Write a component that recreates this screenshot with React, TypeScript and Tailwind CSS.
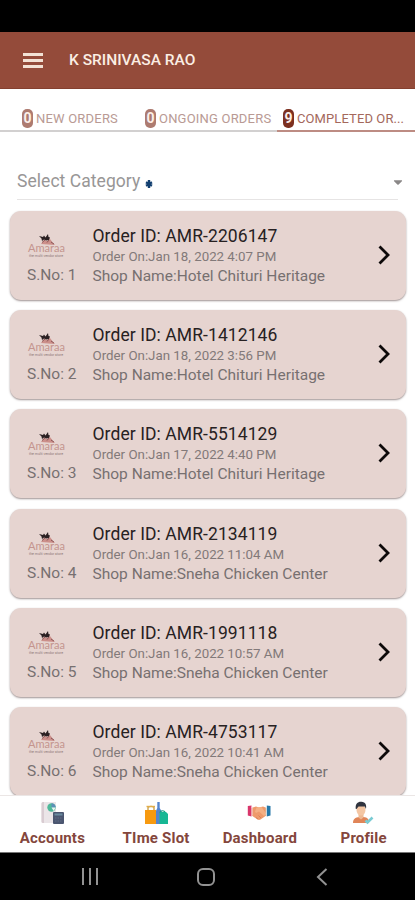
import { FaCaretDown } from 'react-icons/fa';

const tabs = [
  { count: 0, label: 'NEW ORDERS', className: 'w-[123px] pl-[22px]', active: false },
  { count: 0, label: 'ONGOING ORDERS', className: 'w-[154px] pl-[22px]', active: false },
  { count: 9, label: 'COMPLETED OR...', className: 'w-[138px] pl-[6px]', active: true },
];

const orders = [
  { id: 'AMR-2206147', date: 'Jan 18, 2022 4:07 PM', shop: 'Hotel Chituri Heritage' },
  { id: 'AMR-1412146', date: 'Jan 18, 2022 3:56 PM', shop: 'Hotel Chituri Heritage' },
  { id: 'AMR-5514129', date: 'Jan 17, 2022 4:40 PM', shop: 'Hotel Chituri Heritage' },
  { id: 'AMR-2134119', date: 'Jan 16, 2022 11:04 AM', shop: 'Sneha Chicken Center' },
  { id: 'AMR-1991118', date: 'Jan 16, 2022 10:57 AM', shop: 'Sneha Chicken Center' },
  { id: 'AMR-4753117', date: 'Jan 16, 2022 10:41 AM', shop: 'Sneha Chicken Center' },
];

function ShopLogo() {
  return (
    <svg width="40" height="26" viewBox="0 0 40 26" className="block">
      <path d="M14 11 L17 7 L20 8 L23 6 L26 10 L28 12 Z" fill="#c0726c" opacity="0.7" />
      <path d="M12 3 L16 4 L17 2.500 L18.500 4.500 L21 1 L21.500 4 L23 4.500 L22 7 L19 7.500 L17 6.500 L15 8 L14.500 5.500 Z" fill="#2b2022" />
      <path d="M15 9.500 L18 7 M20 9.500 L22 7 M24 9 L27 11" stroke="#7b4648" strokeWidth="0.800" fill="none" />
      <text x="1" y="19" fontSize="11" fill="#c4948e" textLength="37" lengthAdjust="spacingAndGlyphs" fontFamily="Lato, sans-serif">
        Amaraa
      </text>
      <text x="2" y="24" fontSize="3" fill="#8f7a77" textLength="34" lengthAdjust="spacingAndGlyphs" fontFamily="Roboto, sans-serif">
        the multi vendor store
      </text>
    </svg>
  );
}

function AccountsIcon() {
  return (
    <svg width="24" height="24" viewBox="0 0 24 24">
      <path d="M3 1h13v21H3a1.500 1.500 0 0 1-1.500-1.500V2.500A1.500 1.500 0 0 1 3 1z" fill="#ebe5e8" />
      <path d="M1.500 2.500A1.500 1.500 0 0 1 3 1h1v21H3a1.500 1.500 0 0 1-1.500-1.500z" fill="#d9ccd2" />
      <circle cx="11.500" cy="6.500" r="4.200" fill="#4fb99a" />
      <path d="M11.500 6.500V2.300a4.200 4.200 0 0 1 4.200 4.200z" fill="#5d8fb8" />
      <path d="M11.500 6.500h4.200l-2 3.500z" fill="#e9f3ef" />
      <rect x="13" y="11" width="11" height="12" rx="1" fill="#4b5670" />
      <rect x="14.500" y="12.500" width="8" height="2" fill="#6b8ba0" />
      <path d="M15 17h7M15 20h7" stroke="#616c85" strokeWidth="1" strokeDasharray="1.500 1" />
    </svg>
  );
}

function TimeSlotIcon() {
  return (
    <svg width="24" height="24" viewBox="0 0 24 24">
      <path d="M4 10V6.500C4 5 10 5 10 6.500V10" stroke="#c89a3c" strokeWidth="1.300" fill="none" />
      <path d="M2.500 5.500h8.500" stroke="#e2ad4a" strokeWidth="1.400" />
      <path d="M13.300 1h2.400v6l2.300 4v12h-6.500V11l1.800-4z" fill="#5485cf" />
      <rect x="1" y="9" width="11" height="14" fill="#f79a10" />
      <path d="M16 12c0-3 5-3 5 0" stroke="#1c9f81" strokeWidth="1.200" fill="none" />
      <path d="M15.500 12.500L17 11h5l2 2v10h-8.500z" fill="#17b794" />
    </svg>
  );
}

function DashboardIcon() {
  return (
    <svg width="24" height="24" viewBox="0 0 24 24">
      <path d="M4 7l5-1.500L12 6.500l4-1L20 7v7l-6.500 4.500c-1 .6-2 .6-3 0L4 14z" fill="#ee9a6b" />
      <path d="M9.500 6.500l5-.500 5 7-2.500 2-5-4.500-3 1.500-1-1.500z" fill="#f5b083" />
      <path d="M9 16.500l2 1.500M11.500 14.500l2.500 2.500" stroke="#d98055" strokeWidth="0.900" />
      <path d="M.8 5L4.500 4.500v11L.8 14.500z" fill="#d9366b" />
      <path d="M4.500 5.500l1 .3v8.700l-1 .3z" fill="#f6dbe3" />
      <path d="M23.500 5L19.800 4.500v11l3.700-1z" fill="#2477a8" />
      <path d="M19.800 5.500l-1 .3v8.700l1 .3z" fill="#d5e9f2" />
    </svg>
  );
}

function ProfileIcon() {
  return (
    <svg width="24" height="24" viewBox="0 0 24 24">
      <path d="M2 22c0-4 2-5.500 6.500-6h4c4 .5 5.500 2 5.500 6z" fill="#e08558" />
      <path d="M7.500 12h5v4.500l-2.500 2-2.500-2z" fill="#eeb993" />
      <ellipse cx="10" cy="9" rx="4.500" ry="5.500" fill="#f4c6a3" />
      <path d="M4.800 8C4 2.500 7 .5 10.500.8 14.500 1 15.800 4 15 8l-1.200-2.500H7.500L5.500 8z" fill="#30343f" />
      <path d="M14.500 19.500l2 2 5-5" stroke="#79cbd3" strokeWidth="2.600" fill="none" />
    </svg>
  );
}

const navItems = [
  { label: 'Accounts', icon: AccountsIcon },
  { label: 'TIme Slot', icon: TimeSlotIcon },
  { label: 'Dashboard', icon: DashboardIcon },
  { label: 'Profile', icon: ProfileIcon },
];

export default function App() {
  return (
    <div className="flex h-[900px] w-[415px] flex-col overflow-hidden bg-white font-['Roboto',sans-serif]">
      <div className="h-8 shrink-0 bg-black" />

      <header className="flex h-[57px] shrink-0 items-center border-b border-[#84402f] bg-[#944b3a] pl-[23px]">
        <div className="flex w-5 flex-col gap-[3px]">
          <span className="h-[3px] bg-[#f3e2d5]" />
          <span className="h-[3px] bg-[#f3e2d5]" />
          <span className="h-[3px] bg-[#f3e2d5]" />
        </div>
        <h1 className="ml-[26px] pt-px text-[15.500px] font-medium text-[#fbeee4]">K SRINIVASA RAO</h1>
      </header>

      <nav className="flex h-[43px] shrink-0">
        {tabs.map((tab) => (
          <div
            key={tab.label}
            className={`flex items-center whitespace-nowrap border-b-2 pt-[18px] ${tab.className} ${
              tab.active ? 'border-[#bd8c83] text-[#a4685c]' : 'border-[#d2d0d0] text-[#b99a94]'
            }`}
          >
            <span
              className={`flex h-[19px] w-[11px] items-center justify-center rounded-[5px] text-[14px] font-bold text-[#fbeee9] ${
                tab.active ? 'bg-[#7c3020]' : 'bg-[#ad7b70]'
              }`}
            >
              {tab.count}
            </span>
            <span className={`ml-[3px] text-[13px] ${tab.active ? 'tracking-[0.1px]' : 'tracking-[0.2px]'}`}>
              {tab.label}
            </span>
          </div>
        ))}
      </nav>

      <div className="mx-[17px] flex h-[68px] shrink-0 items-center border-b border-[#e6e4e4] pt-[32px]">
        <span className="text-[17.500px] tracking-[0.050px] text-[#989696]">Select Category</span>
        <svg width="8" height="8" viewBox="0 0 8 8" className="ml-[5px] mt-1">
          <path d="M4 0v8M1 2.300l6 3.400M7 2.300l-6 3.400" stroke="#123f70" strokeWidth="2.400" />
        </svg>
        <FaCaretDown className="-mr-[7px] ml-auto h-3.5 w-3.5 text-[#8a8787]" />
      </div>

      <main className="flex min-h-0 flex-1 flex-col gap-[10.200px] overflow-hidden pl-[10px] pr-[9px] pt-[11px]">
        {orders.map((order, index) => (
          <div
            key={order.id}
            className="flex h-[89px] shrink-0 rounded-[11px] bg-[#e6d4d0] shadow-[0_1px_2px_rgba(60,35,35,0.5)]"
          >
            <div className="w-[82.500px] shrink-0 pl-[17px] pt-[22px]">
              <ShopLogo />
              <p className="text-[15.500px] leading-[32px] text-[#777070]">S.No: {index + 1}</p>
            </div>
            <div className="flex-1 whitespace-nowrap pt-[14px]">
              <h2 className="text-[17.500px] leading-[23px] tracking-[0.080px] text-[#272122]">Order ID: {order.id}</h2>
              <p className="text-[13.300px] leading-[18px] text-[#827979]">Order On:{order.date}</p>
              <p className="text-[15.500px] leading-[20px] text-[#777070]">Shop Name:{order.shop}</p>
            </div>
            <svg width="14" height="20" viewBox="0 0 14 20" className="mr-[15px] mt-[34px]">
              <path d="M2.500 1.500l8.500 8.500-8.500 8.500" stroke="#0d0909" strokeWidth="2.800" fill="none" />
            </svg>
          </div>
        ))}
      </main>

      <footer className="grid h-[57px] shrink-0 grid-cols-4 border-t border-[#ebe6e5] bg-white">
        {navItems.map(({ label, icon: Icon }) => (
          <div key={label} className="flex flex-col items-center pt-[5px]">
            <Icon />
            <span className="ml-px mt-[3px] text-[15px] font-bold leading-5 tracking-[0.2px] text-[#84463c]">{label}</span>
          </div>
        ))}
      </footer>

      <div className="flex h-12 shrink-0 items-center border-t border-[#777] bg-black">
        <div className="ml-[82px] flex gap-[5px]">
          <span className="h-[17px] w-[2px] bg-[#929292]" />
          <span className="h-[17px] w-[2px] bg-[#929292]" />
          <span className="h-[17px] w-[2px] bg-[#929292]" />
        </div>
        <div className="ml-[99px] h-[18px] w-[18px] rounded-[6px] border-2 border-[#929292]" />
        <svg width="12" height="18" viewBox="0 0 12 18" className="ml-[101px]">
          <path d="M10.500 1L2 9l8.500 8" stroke="#929292" strokeWidth="2" fill="none" />
        </svg>
      </div>
    </div>
  );
}
